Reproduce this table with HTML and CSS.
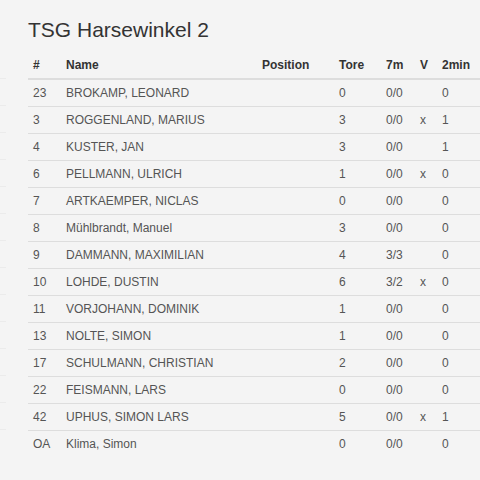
FILE: index.html
```html
<!DOCTYPE html>
<html lang="de">
<head>
<meta charset="utf-8">
<title>TSG Harsewinkel 2</title>
<link rel="stylesheet" href="styles.css">
</head>
<body>
<div class="page">
  <div class="side">
    <div class="side-row"></div><div class="side-row"></div><div class="side-row"></div><div class="side-row"></div>
    <div class="side-row"></div><div class="side-row"></div><div class="side-row"></div><div class="side-row"></div>
    <div class="side-row"></div><div class="side-row"></div><div class="side-row"></div><div class="side-row"></div>
    <div class="side-row"></div><div class="side-row"></div>
  </div>
  <div class="main">
    <h2 class="title">TSG Harsewinkel 2</h2>
    <table class="roster">
      <colgroup>
        <col class="c-nr"><col class="c-name"><col class="c-pos"><col class="c-tore"><col class="c-7m"><col class="c-v"><col class="c-2min">
      </colgroup>
      <thead>
        <tr><th>#</th><th>Name</th><th>Position</th><th>Tore</th><th>7m</th><th>V</th><th>2min</th></tr>
      </thead>
      <tbody>
        <tr><td>23</td><td>BROKAMP, LEONARD</td><td></td><td>0</td><td>0/0</td><td></td><td>0</td></tr>
        <tr><td>3</td><td>ROGGENLAND, MARIUS</td><td></td><td>3</td><td>0/0</td><td>x</td><td>1</td></tr>
        <tr><td>4</td><td>KUSTER, JAN</td><td></td><td>3</td><td>0/0</td><td></td><td>1</td></tr>
        <tr><td>6</td><td>PELLMANN, ULRICH</td><td></td><td>1</td><td>0/0</td><td>x</td><td>0</td></tr>
        <tr><td>7</td><td>ARTKAEMPER, NICLAS</td><td></td><td>0</td><td>0/0</td><td></td><td>0</td></tr>
        <tr><td>8</td><td>Mühlbrandt, Manuel</td><td></td><td>3</td><td>0/0</td><td></td><td>0</td></tr>
        <tr><td>9</td><td>DAMMANN, MAXIMILIAN</td><td></td><td>4</td><td>3/3</td><td></td><td>0</td></tr>
        <tr><td>10</td><td>LOHDE, DUSTIN</td><td></td><td>6</td><td>3/2</td><td>x</td><td>0</td></tr>
        <tr><td>11</td><td>VORJOHANN, DOMINIK</td><td></td><td>1</td><td>0/0</td><td></td><td>0</td></tr>
        <tr><td>13</td><td>NOLTE, SIMON</td><td></td><td>1</td><td>0/0</td><td></td><td>0</td></tr>
        <tr><td>17</td><td>SCHULMANN, CHRISTIAN</td><td></td><td>2</td><td>0/0</td><td></td><td>0</td></tr>
        <tr><td>22</td><td>FEISMANN, LARS</td><td></td><td>0</td><td>0/0</td><td></td><td>0</td></tr>
        <tr><td>42</td><td>UPHUS, SIMON LARS</td><td></td><td>5</td><td>0/0</td><td>x</td><td>1</td></tr>
        <tr><td>OA</td><td>Klima, Simon</td><td></td><td>0</td><td>0/0</td><td></td><td>0</td></tr>
      </tbody>
    </table>
  </div>
</div>
</body>
</html>
```
FILE: styles.css
```css
html, body {
  margin: 0;
  padding: 0;
  background: #f4f4f4;
  overflow: hidden;
}
body {
  font-family: "Liberation Sans", Arial, sans-serif;
  font-size: 12px;
  color: #555;
}
.page {
  display: flex;
  gap: 22px;
  width: 480px;
}
.side {
  width: 6px;
  flex: none;
  padding-top: 78px;
}
.side-row {
  height: 26px;
  border-top: 1px solid #ebebeb;
}
.main {
  flex: 1;
  min-width: 0;
  padding-top: 18px;
}
.title {
  margin: 0 0 10px 0;
  font-size: 21px;
  line-height: 24px;
  font-weight: normal;
  color: #333;
}
.roster {
  width: 452px;
  border-collapse: collapse;
  table-layout: fixed;
}
.c-nr { width: 33px; }
.c-name { width: 196px; }
.c-pos { width: 77px; }
.c-tore { width: 47px; }
.c-7m { width: 34px; }
.c-v { width: 22px; }
.c-2min { width: 43px; }
.roster th,
.roster td {
  padding: 4px 5px;
  line-height: 18px;
  text-align: left;
  white-space: nowrap;
  vertical-align: middle;
}
.roster th {
  font-weight: bold;
  color: #333;
  border-bottom: 2px solid #dddddd;
}
.roster td {
  border-top: 1px solid #dddddd;
}
.roster tbody tr:first-child td {
  border-top: 0;
}
```
